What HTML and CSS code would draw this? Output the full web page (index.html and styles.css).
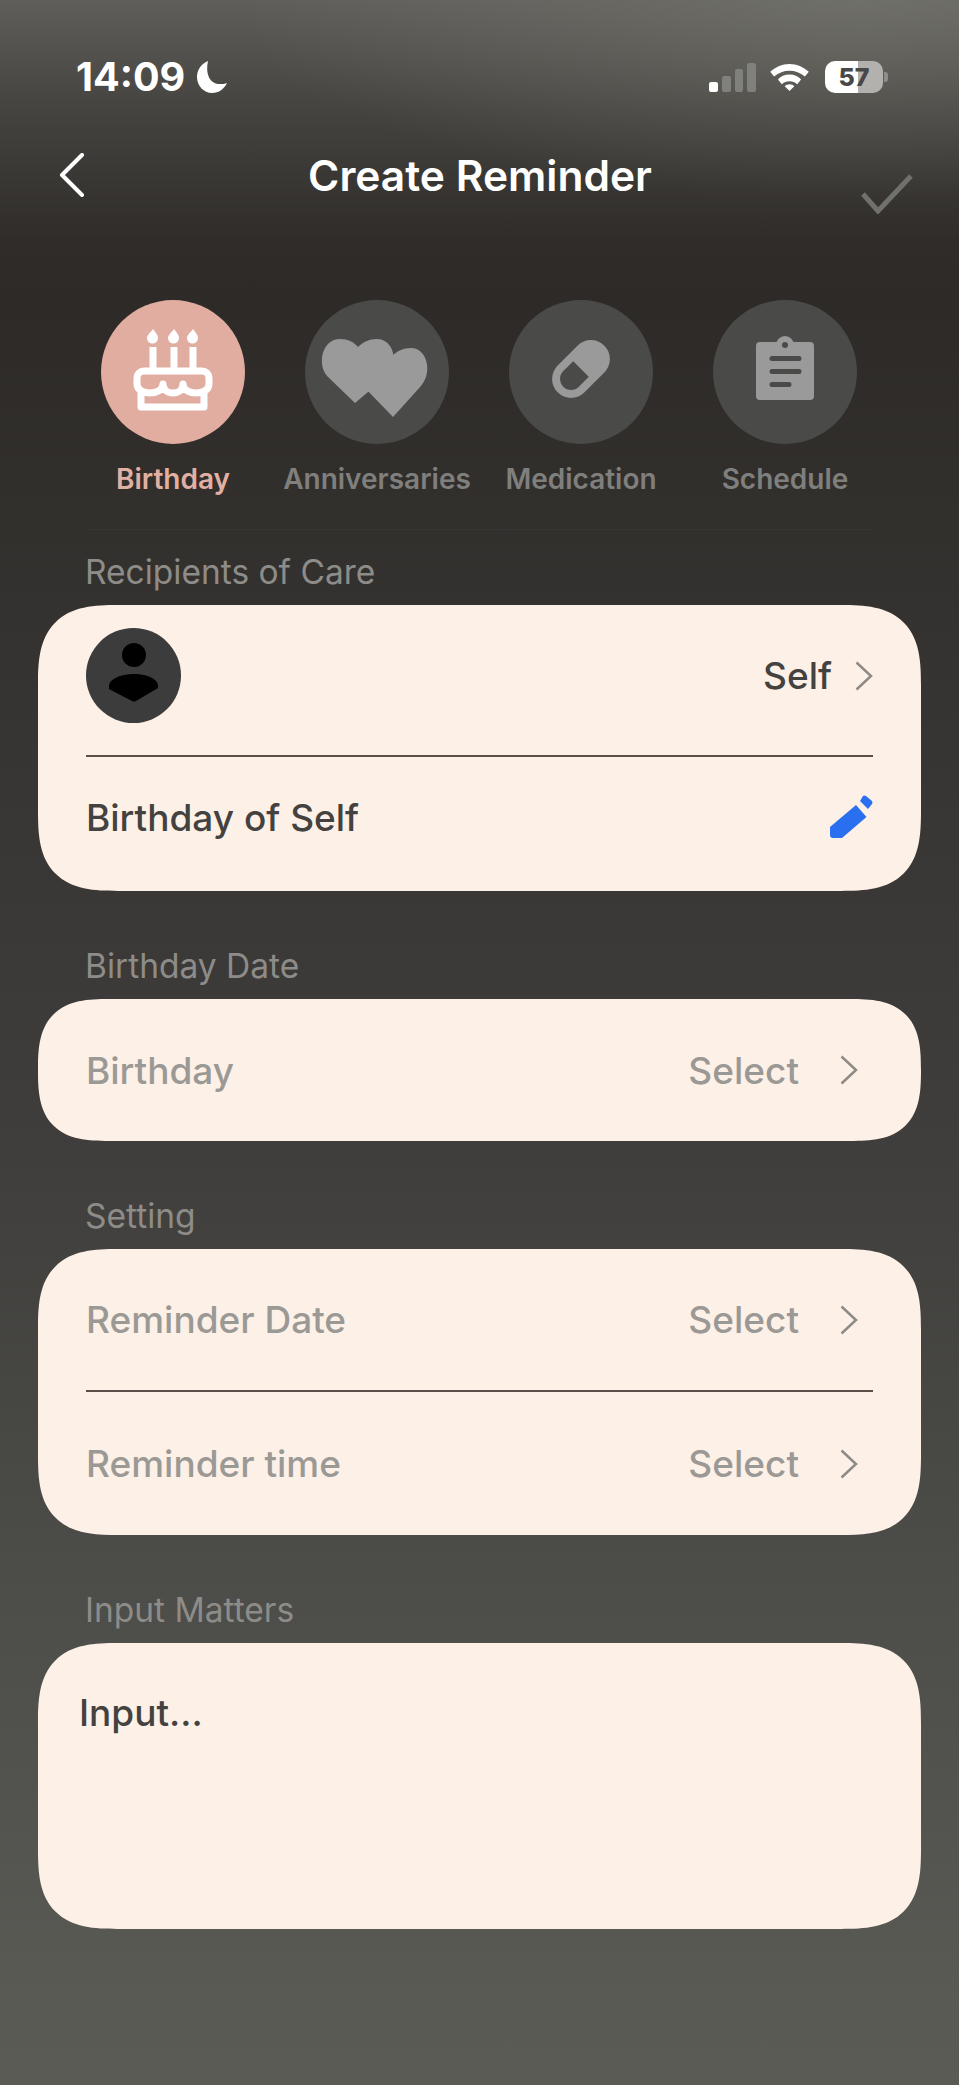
FILE: index.html
```html
<!DOCTYPE html>
<html lang="en">
<head>
    <meta charset="UTF-8">
    <meta name="viewport" content="width=device-width, initial-scale=1.0">
    <title>Create Reminder</title>
    <link rel="stylesheet" href="styles.css">
</head>
<body>
    <div class="status">
        <div class="clock">
            <span>14:09</span>
            <svg class="moon" viewBox="0 0 30 32"><path d="M11 0C4 3 0 9 0 16c0 9 7 16 15 16 7 0 12-4 15-10-2 1-5 1-7 1C14 23 8 15 11 0z" fill="#fff"/></svg>
        </div>
        <div class="status-icons">
            <div class="signal">
                <i class="bar bar-on"></i>
                <i class="bar bar-2"></i>
                <i class="bar bar-3"></i>
                <i class="bar bar-4"></i>
            </div>
            <svg class="wifi" viewBox="0 0 40 28"><path d="M20 0C12 0 6 3 0 8l4 5c5-4 10-6 16-6s11 2 16 6l4-5C34 3 28 0 20 0z" fill="#fff"/><path d="M20 11c-5 0-9 2-12 5l4 5c2-2 5-3 8-3s6 1 8 3l4-5c-3-3-7-5-12-5z" fill="#fff"/><path d="M20 21c-2 0-4 1-5 2l5 5 5-5c-1-1-3-2-5-2z" fill="#fff"/></svg>
            <div class="battery">
                <div class="battery-body"><span>57</span></div>
                <i class="battery-nub"></i>
            </div>
        </div>
    </div>

    <div class="topbar">
        <svg class="back" viewBox="0 0 26 44"><path d="M23 2L3 22l20 20" fill="none" stroke="#fff" stroke-width="4" stroke-linecap="round" stroke-linejoin="round"/></svg>
        <div class="title">Create Reminder</div>
        <svg class="done" viewBox="0 0 52 40"><path d="M2 20l15 17L50 2" fill="none" stroke="#70706c" stroke-width="5"/></svg>
    </div>

    <div class="cats">
        <div class="cat cat-active">
            <div class="cat-icon">
                <svg viewBox="0 0 144 144">
                    <g fill="#fff">
                        <path d="M52 29c3 4 5 6 5 9a5.500 5.500 0 0 1-11 0c0-3 3-5 6-9z"/>
                        <path d="M73 29c3 4 5 6 5 9a5.500 5.500 0 0 1-11 0c0-3 3-5 6-9z"/>
                        <path d="M92 29c3 4 5 6 5 9a5.500 5.500 0 0 1-11 0c0-3 3-5 6-9z"/>
                        <rect x="48.500" y="47" width="7" height="24"/>
                        <rect x="69.500" y="47" width="7" height="24"/>
                        <rect x="88.500" y="47" width="7" height="24"/>
                    </g>
                    <path d="M43 71h58a7 7 0 0 1 7 7v6c0 12-26 12-26 0 0 12-20 12-20 0 0 12-26 12-26 0v-6a7 7 0 0 1 7-7zM40 90v17h63V90" fill="none" stroke="#fff" stroke-width="7" stroke-linejoin="round"/>
                </svg>
            </div>
            <div class="cat-name">Birthday</div>
        </div>
        <div class="cat">
            <div class="cat-icon">
                <svg viewBox="0 0 144 144">
                    <path d="M50 103L22 76C12 64 17 39 35 39c8 0 14 3 18 8 5-5 11-8 19-8 16 0 23 23 10 37z" fill="#9a9a9a"/>
                    <path d="M88 117L58 86C46 72 52 48 68 48c8 0 13 3 19 8 5-5 11-8 19-8 16 0 22 24 10 38z" fill="#9a9a9a"/>
                </svg>
            </div>
            <div class="cat-name">Anniversaries</div>
        </div>
        <div class="cat">
            <div class="cat-icon">
                <svg viewBox="0 0 144 144">
                    <g transform="rotate(-45 72 69)">
                        <rect x="39" y="50" width="66" height="38" rx="19" fill="#9a9a9a"/>
                        <path d="M72 58H58a11 11 0 0 0 0 22h14z" fill="#4a4a49"/>
                    </g>
                </svg>
            </div>
            <div class="cat-name">Medication</div>
        </div>
        <div class="cat">
            <div class="cat-icon">
                <svg viewBox="0 0 144 144">
                    <rect x="43" y="42" width="58" height="58" rx="4" fill="#9a9a9a"/>
                    <circle cx="72" cy="45" r="9" fill="#9a9a9a"/>
                    <circle cx="72" cy="45" r="3" fill="#4a4a49"/>
                    <path d="M59 58.500h27M59 71.500h27M59 84.500h17" fill="none" stroke="#4a4a49" stroke-width="5" stroke-linecap="round"/>
                </svg>
            </div>
            <div class="cat-name">Schedule</div>
        </div>
    </div>

    <div class="cats-line"></div>

    <div class="label label-first">Recipients of Care</div>
    <div class="card">
        <div class="row row-tall">
            <svg class="avatar" viewBox="0 0 95 95">
                <circle cx="47.500" cy="47.500" r="47.500" fill="#3c3c3c"/>
                <circle cx="48" cy="27" r="12" fill="#000"/>
                <path d="M23 58c0-7 12-12 25-12s24 5 24 12v2L50 73q-2 1-4 0L23 61z" fill="#000"/>
            </svg>
            <div class="row-right">
                <span class="value value-dark">Self</span>
                <svg class="chev" viewBox="0 0 18 30"><path d="M1.500 1.500L16 15 1.500 28.500" fill="none" stroke="#8e8a86" stroke-width="2.500"/></svg>
            </div>
        </div>
        <div class="line"></div>
        <div class="row row-edit">
            <span class="name name-dark">Birthday of Self</span>
            <svg class="pencil" viewBox="0 0 44 46">
                <path d="M1 33L27 11l10.500 12L13 44H4q-3 0-3-3z" fill="#2a6ff0"/>
                <path d="M31 7l3-5q1-1 3 0l6 5q1 2 0 3l-4 5z" fill="#2a6ff0"/>
            </svg>
        </div>
    </div>

    <div class="label">Birthday Date</div>
    <div class="card">
        <div class="row row-select">
            <span class="name">Birthday</span>
            <div class="row-right row-right-select">
                <span class="value">Select</span>
                <svg class="chev" viewBox="0 0 18 30"><path d="M1.500 1.500L16 15 1.500 28.500" fill="none" stroke="#8e8a86" stroke-width="2.500"/></svg>
            </div>
        </div>
    </div>

    <div class="label">Setting</div>
    <div class="card">
        <div class="row row-select row-short">
            <span class="name">Reminder Date</span>
            <div class="row-right row-right-select">
                <span class="value">Select</span>
                <svg class="chev" viewBox="0 0 18 30"><path d="M1.500 1.500L16 15 1.500 28.500" fill="none" stroke="#8e8a86" stroke-width="2.500"/></svg>
            </div>
        </div>
        <div class="line"></div>
        <div class="row row-select row-long">
            <span class="name">Reminder time</span>
            <div class="row-right row-right-select">
                <span class="value">Select</span>
                <svg class="chev" viewBox="0 0 18 30"><path d="M1.500 1.500L16 15 1.500 28.500" fill="none" stroke="#8e8a86" stroke-width="2.500"/></svg>
            </div>
        </div>
    </div>

    <div class="label">Input Matters</div>
    <div class="card card-input">
        <span class="placeholder">Input...</span>
    </div>
</body>
</html>
```

FILE: styles.css
```css
*{
    padding: 0;
    margin: 0;
    box-sizing: border-box;
}
body{
    width: 959px;
    height: 2085px;
    overflow: hidden;
    font-family: "Inter", "Liberation Sans", sans-serif;
    background:
        radial-gradient(ellipse 620px 200px at 860px 0, rgba(125,125,118,.55), rgba(125,125,118,0)),
        linear-gradient(to bottom, #5f5e5a 0, #45433f 110px, #2f2c29 240px, #2d2a27 300px, #363432 700px, #3f3e3c 1150px, #4d4d49 1600px, #595a54 2000px, #5a5b55 2085px);
}

/* status bar */
.status{
    height: 134px;
    padding: 57px 71px 0 76px;
    display: flex;
    justify-content: space-between;
    align-items: flex-start;
}
.clock{
    display: flex;
    align-items: center;
    height: 40px;
    color: #fff;
    font-size: 39.500px;
    font-weight: 700;
    gap: 12px;
}
.moon{
    width: 30px;
    height: 32px;
}
.status-icons{
    display: flex;
    align-items: center;
    height: 40px;
}
.signal{
    display: flex;
    align-items: flex-end;
    gap: 4px;
    width: 47px;
    height: 29px;
    margin-right: 14px;
}
.bar{
    display: block;
    width: 9px;
    background: #80807c;
    border-radius: 2px;
}
.bar-on{
    height: 10px;
    background: #fff;
}
.bar-2{
    height: 16px;
}
.bar-3{
    height: 23px;
}
.bar-4{
    height: 29px;
}
.wifi{
    width: 39px;
    height: 27px;
    margin-right: 16px;
}
.battery{
    display: flex;
    align-items: center;
    gap: 1px;
}
.battery-body{
    width: 58px;
    height: 32px;
    border-radius: 10px;
    background: linear-gradient(to right, #fff 0, #fff 33px, #b2b1ae 33px);
    color: #484846;
    font-size: 25px;
    font-weight: 800;
    line-height: 32px;
    text-align: center;
}
.battery-nub{
    display: block;
    width: 4px;
    height: 10px;
    border-radius: 0 3px 3px 0;
    background: #8e8d89;
}

/* header */
.topbar{
    height: 82px;
    padding: 0 46px 0 59px;
    display: flex;
    align-items: center;
    justify-content: space-between;
}
.back{
    width: 26px;
    height: 44px;
}
.title{
    color: #fff;
    font-size: 42.500px;
    font-weight: 600;
    margin-left: 14px;
}
.done{
    width: 52px;
    height: 40px;
    margin-top: 38px;
}

/* categories */
.cats{
    margin-top: 84px;
    padding-left: 71px;
    display: grid;
    grid-template-columns: repeat(4, 204px);
}
.cat{
    display: flex;
    flex-direction: column;
    align-items: center;
}
.cat-icon{
    width: 144px;
    height: 144px;
    border-radius: 50%;
    background: #4a4a49;
}
.cat-icon svg{
    display: block;
    width: 144px;
    height: 144px;
}
.cat-active .cat-icon{
    background: #e0ada0;
}
.cat-name{
    margin-top: 17px;
    color: #7f7f7d;
    font-size: 28px;
    font-weight: 600;
    line-height: 36px;
    white-space: nowrap;
}
.cat-active .cat-name{
    color: #e2b0a3;
}
.cats-line{
    height: 1px;
    margin: 32px 86px 0;
    background: rgba(255,255,255,.03);
}

/* form */
.label{
    height: 40px;
    margin: 55px 0 13px 85px;
    color: #8d8c88;
    font-size: 33.500px;
    line-height: 40px;
}
.label-first{
    margin-top: 22px;
}
.card{
    width: 883px;
    margin-left: 38px;
    background: #fdf0e7;
    border-radius: 62px;
}
@supports (corner-shape: superellipse(1.5)){
    .card{
        border-radius: 80px;
        corner-shape: superellipse(1.5);
    }
}
.row{
    display: flex;
    align-items: center;
    justify-content: space-between;
    padding: 0 48px;
}
.row-tall{
    height: 150px;
    padding-bottom: 9px;
}
.row-edit{
    height: 134px;
    padding-bottom: 14px;
}
.row-select{
    height: 142px;
}
.row-short{
    height: 141px;
}
.row-long{
    height: 143px;
}
.row-right{
    display: flex;
    align-items: center;
    gap: 23px;
}
.row-right-select{
    gap: 41px;
    margin-right: 15px;
}
.avatar{
    width: 95px;
    height: 95px;
}
.name,
.value{
    color: #9b9995;
    font-size: 37px;
    font-weight: 500;
}
.name-dark,
.value-dark{
    color: #434240;
}
.chev{
    width: 18px;
    height: 30px;
}
.pencil{
    width: 44px;
    height: 46px;
}
.line{
    height: 2px;
    margin: 0 48px;
    background: #5a4f48;
}
.card-input{
    height: 286px;
    padding: 47px 41px;
}
.placeholder{
    color: #434240;
    font-size: 37px;
    font-weight: 500;
}
```
